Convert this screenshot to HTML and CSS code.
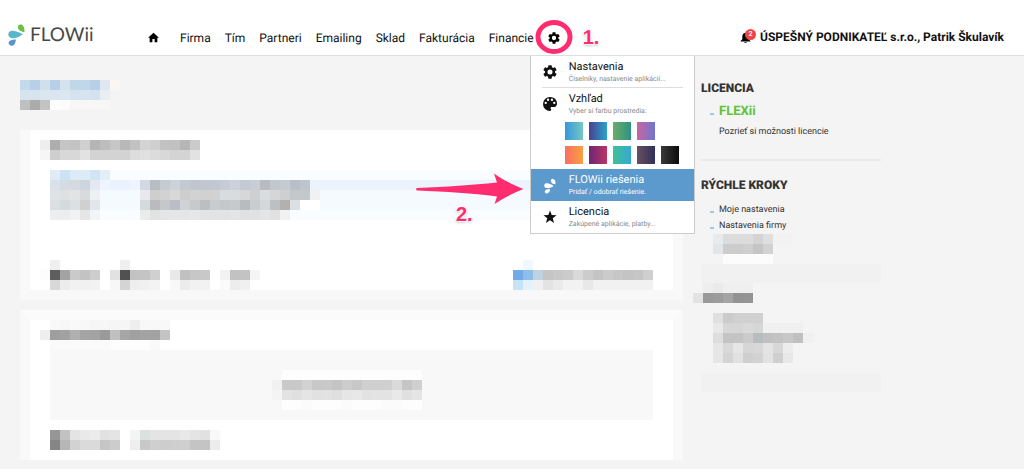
FILE: index.html
```html
<!DOCTYPE html>
<html lang="sk">
<head>
<meta charset="utf-8">
<meta name="viewport" content="width=device-width, initial-scale=1">
<title>FLOWii</title>
<link rel="stylesheet" href="styles.css">
</head>
<body>
<header class="topbar">
  <a class="logo" href="#" aria-label="FLOWii">
    <svg class="logo-mark" viewBox="0 0 17 22" aria-hidden="true">
      <path fill="#6cbf45" d="M16.400 8.200C12.800 7.600 9.900 5.900 9.900 3.200C9.900 1.500 11.300.3 13 .6C15.900 1.200 16.700 4.600 16.400 8.200Z"/>
      <path fill="#56b7cc" d="M14.800 10.300C11.500 12.900 7.600 14.700 4.200 14.200C1.600 13.800.2 12.200.3 10.200C.5 7.800 2.400 6.600 5 6.800C8.300 7 11.700 8.500 14.800 10.300Z"/>
      <path fill="#5b93d0" d="M7.800 15.400C7.800 18.600 6.400 21.600 3.700 21.700C1.800 21.700.5 20.500.6 18.800C.8 16.100 4.200 15.500 7.800 15.400Z"/>
    </svg>
    <span>FLOWii</span>
  </a>
  <nav class="nav" aria-label="Hlavné menu">
    <a class="home" href="#" aria-label="Domov"><svg viewBox="0 0 12 11" aria-hidden="true"><path d="M6 .3L11.900 5.900H10.200V10.700H7.200V7.200H4.800V10.700H1.800V5.900H.1Z"/></svg></a>
    <a href="#">Firma</a>
    <a href="#">Tím</a>
    <a href="#">Partneri</a>
    <a href="#">Emailing</a>
    <a href="#">Sklad</a>
    <a href="#">Fakturácia</a>
    <a href="#">Financie</a>
    <div class="settings">
      <button class="gear" type="button" aria-label="Nastavenia" aria-expanded="true"><svg viewBox="2 2 20 20" aria-hidden="true"><path d="M19.140 12.940c.04-.3.060-.61.060-.94s-.02-.64-.07-.94l2.030-1.580a.49.49 0 0 0 .12-.61l-1.920-3.320a.49.49 0 0 0-.59-.22l-2.390.96a7 7 0 0 0-1.620-.94l-.36-2.540A.48.48 0 0 0 13.920 2.400h-3.840a.48.48 0 0 0-.47.41l-.36 2.540c-.59.24-1.130.57-1.620.94l-2.390-.96a.48.48 0 0 0-.59.22L2.740 8.870a.47.47 0 0 0 .12.610l2.030 1.580c-.05.3-.09.63-.09.940s.02.640.070.940l-2.030 1.580a.49.49 0 0 0-.12.610l1.920 3.320c.12.220.370.290.590.220l2.390-.96c.5.380 1.030.700 1.620.940l.36 2.540c.05.240.240.410.480.410h3.840c.24 0 .440-.170.470-.41l.36-2.540c.59-.24 1.130-.56 1.620-.94l2.390.96c.22.080.470 0 .590-.22l1.920-3.320a.47.47 0 0 0-.12-.61zM12 15.600a3.600 3.600 0 1 1 0-7.200 3.600 3.600 0 0 1 0 7.200z"/></svg></button>
      <svg class="ring" viewBox="0 0 38 36" aria-hidden="true"><ellipse cx="19" cy="18" rx="16" ry="14.500"/></svg>
      <span class="mark mark-one">1.</span>
      <div class="menu">
        <a class="item ruled" href="#">
          <svg class="icon" viewBox="2 2 20 20" aria-hidden="true"><path d="M19.140 12.940c.04-.3.060-.61.060-.94s-.02-.64-.07-.94l2.030-1.580a.49.49 0 0 0 .12-.61l-1.920-3.320a.49.49 0 0 0-.59-.22l-2.390.96a7 7 0 0 0-1.620-.94l-.36-2.540A.48.48 0 0 0 13.920 2.400h-3.840a.48.48 0 0 0-.47.41l-.36 2.540c-.59.24-1.130.57-1.620.94l-2.390-.96a.48.48 0 0 0-.59.22L2.740 8.870a.47.47 0 0 0 .12.610l2.030 1.580c-.05.3-.09.63-.09.940s.02.640.070.940l-2.030 1.580a.49.49 0 0 0-.12.610l1.920 3.320c.12.220.370.290.590.220l2.390-.96c.5.380 1.030.700 1.620.940l.36 2.540c.05.240.240.410.480.410h3.840c.24 0 .440-.170.470-.41l.36-2.540c.59-.24 1.130-.56 1.620-.94l2.390.96c.22.080.470 0 .590-.22l1.920-3.320a.47.47 0 0 0-.12-.61zM12 15.600a3.600 3.600 0 1 1 0-7.200 3.600 3.600 0 0 1 0 7.200z"/></svg>
          <span class="copy"><span class="title">Nastavenia</span><span class="hint">Číselníky, nastavenie aplikácií...</span></span>
        </a>
        <div class="item">
          <svg class="icon" viewBox="3 3 18 18" aria-hidden="true"><path d="M12 3a9 9 0 0 0 0 18c.83 0 1.500-.67 1.500-1.500 0-.39-.15-.74-.39-1.010-.23-.26-.38-.61-.38-.99 0-.83.67-1.500 1.500-1.500H16a5 5 0 0 0 5-5c0-4.420-4.030-8-9-8zm-5.500 9a1.500 1.500 0 1 1 0-3 1.500 1.500 0 0 1 0 3zm3-4a1.500 1.500 0 1 1 0-3 1.500 1.500 0 0 1 0 3zm5 0a1.500 1.500 0 1 1 0-3 1.500 1.500 0 0 1 0 3zm3 4a1.500 1.500 0 1 1 0-3 1.500 1.500 0 0 1 0 3z"/></svg>
          <div class="copy"><span class="title">Vzhľad</span><span class="hint">Vyber si farbu prostredia:</span>
            <div class="swatches">
              <button class="swatch sky" type="button" aria-label="Nebeská"></button>
              <button class="swatch indigo" type="button" aria-label="Indigová"></button>
              <button class="swatch green" type="button" aria-label="Zelená"></button>
              <button class="swatch pink" type="button" aria-label="Ružová"></button>
              <button class="swatch orange row-start" type="button" aria-label="Oranžová"></button>
              <button class="swatch plum" type="button" aria-label="Slivková"></button>
              <button class="swatch mint" type="button" aria-label="Mätová"></button>
              <button class="swatch dusk" type="button" aria-label="Súmrak"></button>
              <button class="swatch black" type="button" aria-label="Čierna"></button>
            </div>
          </div>
        </div>
        <a class="item active" href="#">
          <svg class="icon" viewBox="0 0 14 16" aria-hidden="true"><path d="M12.400 6.300C9.700 5.900 7.800 4.700 7.900 2.700C7.900 1.400 9 .6 10.200.9C12.300 1.400 12.700 3.800 12.400 6.300Z"/><path d="M10.500 8C8.200 9.700 5.900 10.500 3.600 10C1.800 9.600 1 8.500 1.200 7.200C1.500 5.600 2.900 5 4.700 5.300C6.900 5.700 8.800 6.700 10.500 8Z"/><path d="M7 11C7 13.400 5.800 15.400 3.900 15.500C2.500 15.500 1.600 14.600 1.800 13.400C2.100 11.600 4.500 11.100 7 11Z"/></svg>
          <span class="copy"><span class="title">FLOWii riešenia</span><span class="hint">Pridať / odobrať riešenie.</span></span>
        </a>
        <a class="item" href="#">
          <svg class="icon" viewBox="0 0 20 20" aria-hidden="true"><path d="M10 .8L12.400 7.300L19.300 7.500L13.900 11.800L15.800 18.500L10 14.600L4.200 18.500L6.100 11.800L.7 7.500L7.600 7.300Z"/></svg>
          <span class="copy"><span class="title">Licencia</span><span class="hint">Zakúpené aplikácie, platby...</span></span>
        </a>
      </div>
    </div>
  </nav>
  <div class="account">
    <span class="bell"><svg viewBox="0 0 12 12" aria-hidden="true"><path d="M6 .8C8.500 1 9.500 3 9.500 5.200V8L11.300 9.800V10.300H.7V9.800L2.500 8V5.200C2.500 3 3.500 1 6 .8ZM4.600 10.800H7.400C7.200 12.200 4.800 12.200 4.600 10.800Z"/></svg><span class="badge">2</span></span>
    <a href="#">ÚSPEŠNÝ PODNIKATEĽ s.r.o., Patrik Škulavík</a>
  </div>
</header>

<div class="layout">
  <main>
    <div class="mosaic intro" data-cells="c4d9ea b8d0e7 cfdfec b8d0e7 d2e2ef c0d6e9 c0d6e9 b8d0e7 dfe8f1 f9f6f4|d6e4ef d6e4ef dbe7f0 d9e5ef dbe7f0 d4e3ef d6e4ef d2e2ee e9eef3|c0 ab c3 fd fc f9f7f5 f9f7f5 f9f7f5 f7"></div>
    <section class="card first">
      <div class="mosaic outset" data-cells="ee ae c5 c3 d0 b5 bd c6 b8 c2 d4 cf c2 c1 b6 cb|f6 cf d8 d8 e2 d3 d3 d3 d3 dd e0 dc d8 d4 d4 e2"></div>
      <div class="band">
        <div class="mosaic" data-cells="dfecf8 cde3f3 dcebf8 dcebf8 d2e5f5 e2eef8|dbe1ea d5dbe2 d5dae1 cfd5dd e3e8f1 eff5ff eaf2fd eaf2fd f0f5fd d3d9e2 b8bcc3 c6cad3 cdd1da c4c8d0 c1c5ce c2c6cf c3c7d1 c7cbd5 cdd1dc c4c9d2 c9cdd7 b8bbc1 c2c7cf c6cad3 b9bfc8 bfc5cc|e0e3e6 dde1e1 e1e3e5 d8dbdd eef0f3 - - - - e8e9ec ce d2 d6d8d9 ce d2 d1 d2 d8dcde d9dcde d5d7d8 cf d9dddf d4d6d8 cf c4c8ca c4c8ca f1|dbdfe2 d5dadd dce0e3 d0 e3e7ed - - - - d5dadd b9bbbc c5c8ca bbbfc5 d0d3d6 c6cacc bcbfc2 c9ccce c5c8ca c7cacc b9bcbe c9cdd0 d4d8da bbc0c4 b3b1b0 dde0e3 ff ff|ee ed f1f2f3 e6 f2f4f6 - - - - eb e2 e5 e6 e5 e7 e4 e3 e3 e5 e1 e1 e5 e1 f1"></div>
      </div>
      <div class="card-foot">
        <div class="mosaic outset" data-cells="- ef - - - - - - ef|fc 5e a3 ca c3 ce - e2 51 c2 c4 d0 - e9 c1 c7 c8 - f2 c2 c3 f5|- d8 ec f1 f1 f2 - f7 d4 ee f0 f3 - f8 ec f1 f2 - fa ed f0"></div>
        <div class="mosaic" data-cells="- f1f8fd|72ace8 8fbdea c0d1e2 c5 c8 cb d9 cc c4 cb c7 c4 c6 cf|c6e4f6 e6f1fb f0 e3 ea f2 f2 e8 f1 f1 f1 f1 f1 f1"></div>
      </div>
    </section>
    <section class="card second">
      <div class="mosaic outset" data-cells="- f8 f7 f9 f8 f6 f6 f5 f5 ee f8 f8 f8|ee 9e a2 b0 a5 a3 9a c0 a6 a1 a3 a2 c4|- fa fa fa fa fa fa fd fd fd fd f9"></div>
      <div class="panel">
        <div class="mosaic" data-cells="- fd fd fd fd fd fd fd fd fd fd fd fd fd fd|f1 c9 c9 d2 c8 c9 c4 cd c8 d0 cf d0 da c5 cf|f4 e3 e0 e5 e1 e2 df e6 e8 e2 e3 e3 e9 e0 e5|- fd fd fb fd fd fd fb fd fd fd fb fb fd fd"></div>
      </div>
      <div class="mosaic" data-cells="96 c2 e4 e9 eb e1 e4 - f4 dde0e0 e4 e4 e4 e8 e4 e1 f8|85 b6 d2 da da c6 cc - ee c8 cf cd ce cf c4 c4 ec"></div>
    </section>
  </main>
  <aside class="sidebar">
    <section class="license">
      <h2>LICENCIA</h2>
      <ul>
        <li class="plan"><a href="#">FLEXii</a></li>
      </ul>
      <a class="more" href="#">Pozrieť si možnosti licencie</a>
    </section>
    <section class="steps">
      <h2>RÝCHLE KROKY</h2>
      <ul>
        <li><a href="#">Moje nastavenia</a></li>
        <li><a href="#">Nastavenia firmy</a></li>
      </ul>
      <div class="mosaic deep" data-cells="e8ebed dc dc dc d4 df f2 f2|e2e6e9 cc cc cf c5 d2|- fc fc fc fc fc"></div>
    </section>
    <div class="strip"></div>
    <div class="mosaic heading" data-cells="- ee ea ef ef ef|e3 99 9c a4 93 94"></div>
    <div class="mosaic deep" data-cells="e0 cb d0 d0 d0|e9 d6 d6 d9 d6 f0 f0 f0 f0|dd c4 c4 cb b8bcbc c0 c3 c8 c0 f0|e6 d8 e6 d6 d8 e4 d8 ec|e6 d4 e1 cf d2 e2 cf e8"></div>
    <div class="strip"></div>
  </aside>
</div>

<svg class="arrow" viewBox="0 0 110 34" aria-hidden="true"><path d="M1.200 16C30 14.800 56 13.200 81 10.500L78 1.500C88 8.500 98 13.500 107.500 17C98 20.800 88 25.500 78.500 32L81 24.500C56 21.500 30 19.500 1.200 18.600C-.4 18-.4 16.600 1.200 16Z"/></svg>
<span class="mark mark-two">2.</span>
<script src="mosaic.js"></script>
</body>
</html>
```

FILE: mosaic.js
```js
// Builds each pixelated block from its data-cells rows.
// A cell is a grey level (two hex digits), a full hex colour, or "-" for empty.
const NS = "http://www.w3.org/2000/svg";
document.querySelectorAll(".mosaic").forEach((host) => {
  const rows = host.dataset.cells.split("|").map((row) => row.trim().split(" "));
  const columns = Math.max(...rows.map((row) => row.length));
  const svg = document.createElementNS(NS, "svg");
  svg.setAttribute("width", columns * 10);
  svg.setAttribute("height", rows.length * 10);
  svg.setAttribute("aria-hidden", "true");
  rows.forEach((row, y) => row.forEach((cell, x) => {
    if (cell === "-") return;
    const rect = document.createElementNS(NS, "rect");
    rect.setAttribute("x", x * 10);
    rect.setAttribute("y", y * 10);
    rect.setAttribute("width", 10);
    rect.setAttribute("height", 10);
    rect.setAttribute("fill", "#" + (cell.length === 2 ? cell.repeat(3) : cell));
    svg.append(rect);
  }));
  host.append(svg);
});
```

FILE: styles.css
```css
* {
  box-sizing: border-box;
}

body {
  position: relative;
  margin: 0;
  background: #f4f4f4;
  color: #222;
  font-family: Roboto, "Liberation Sans", sans-serif;
  font-size: 12px;
  text-rendering: geometricPrecision;
}

a {
  color: inherit;
  text-decoration: none;
}

button {
  margin: 0;
  padding: 0;
  border: 0;
  background: none;
}

svg {
  display: block;
}

.topbar {
  display: flex;
  align-items: stretch;
  height: 56px;
  padding: 20px 20px 0 8px;
  border-bottom: 1px solid #ddd;
  background: #fff;
}

.logo {
  display: flex;
  align-items: center;
  gap: 5px;
  width: 140px;
  padding-bottom: 5px;
  color: #484848;
  font-family: Lato, sans-serif;
  font-size: 19px;
  line-height: 22px;
}

.logo-mark {
  width: 17px;
  height: 22px;
}

.nav {
  display: flex;
  gap: 14px;
  color: #111;
  line-height: 36px;
}

.home {
  display: flex;
  align-items: center;
  margin-right: 7px;
}

.home svg {
  width: 11px;
  height: 11px;
}

.settings {
  position: relative;
}

.gear {
  display: flex;
  align-items: center;
  height: 35px;
}

.gear svg {
  width: 12px;
  height: 12px;
}

.ring {
  position: absolute;
  top: -1px;
  left: -13px;
  width: 38px;
  height: 36px;
  fill: none;
  stroke: #ff2d6f;
  stroke-width: 5;
}

.mark {
  position: absolute;
  color: #ff2d6f;
  font: bold 20px/24px "Liberation Sans", sans-serif;
  text-shadow: 1px 1px 1px #fff, -1px -1px 1px #fff, 0 1px 3px #999;
}

.mark-one {
  top: 6px;
  left: 35px;
}

.mark-two {
  top: 203px;
  left: 456px;
}

.menu {
  position: absolute;
  z-index: 2;
  top: 36px;
  left: -18px;
  width: 165px;
  border: 1px solid #ccc;
  border-top: 0;
  background: #fff;
  line-height: 13px;
}

.item {
  position: relative;
  display: flex;
  gap: 12px;
  padding: 4px 0 2px 12px;
}

.ruled::after {
  position: absolute;
  right: 11px;
  bottom: 0;
  left: 11px;
  height: 1px;
  background: #ddd;
  content: "";
}

.icon {
  flex: none;
  width: 14px;
  height: 14px;
  margin-top: 5px;
  fill: #111;
}

.copy,
.title,
.hint {
  display: block;
}

.title {
  color: #111;
  font-size: 11px;
}

.hint {
  color: #888;
  font-size: 7px;
}

.active {
  background: #5c99cc;
}

.active .title,
.active .hint {
  color: #fff;
}

.active .icon {
  width: 14px;
  height: 16px;
  fill: #fff;
}

.swatches {
  display: grid;
  grid-template-columns: repeat(5, 18px);
  gap: 6px;
  margin: 4px 0 3px -4px;
}

.swatch {
  height: 18px;
}

.row-start { grid-column-start: 1; }
.sky { background: linear-gradient(90deg, #3498db, #76c7c4); }
.indigo { background: linear-gradient(90deg, #4b3f92, #27a5cb); }
.green { background: linear-gradient(90deg, #6cad68, #2d9282); }
.pink { background: linear-gradient(90deg, #ca659f, #6f75cf); }
.orange { background: linear-gradient(90deg, #fb6d62, #f9a043); }
.plum { background: linear-gradient(90deg, #6c2775, #bd3465); }
.mint { background: linear-gradient(90deg, #3fc194, #37a8d5); }
.dusk { background: linear-gradient(90deg, #69505e, #30305b); }
.black { background: linear-gradient(90deg, #393939, #0c0c0c); }

.account {
  display: flex;
  gap: 4px;
  margin-left: auto;
  color: #111;
  font-weight: 700;
  line-height: 35px;
}

.bell {
  position: relative;
  width: 16px;
  padding-top: 12px;
}

.bell svg {
  width: 11px;
  height: 11px;
}

.badge {
  position: absolute;
  top: 9px;
  right: 0;
  width: 11px;
  height: 11px;
  border-radius: 50%;
  background: #f04444;
  color: #fff;
  font-size: 7px;
  line-height: 11px;
  text-align: center;
}

.layout {
  display: grid;
  grid-template-columns: minmax(0, 1fr) 300px;
  gap: 18px;
  padding: 24px 23px 9px 20px;
}

.intro {
  margin-bottom: 20px;
}

.card {
  border: 0 solid #f9f9f9;
  border-width: 0 10px;
  background: #fff;
}

.first {
  margin-bottom: 10px;
  padding: 10px 20px 0;
  border-bottom: 10px solid #f8f8f8;
}

.second {
  padding: 0 20px 10px;
  border-top: 10px solid #fbfbfb;
}

.outset {
  margin-left: -10px;
}

.band {
  margin: 10px 0 40px;
  background: linear-gradient(#fafdff 10px, #ebf4fc 10px 20px, #f5faff 20px 40px, #fafdff 40px);
}

.card-foot {
  display: flex;
  justify-content: space-between;
}

.panel {
  display: flex;
  justify-content: center;
  margin-bottom: 10px;
  padding: 20px 10px 10px 0;
  background: #f8f8f8;
}

.sidebar {
  color: #333;
  font-size: 9px;
  line-height: 16px;
}

.sidebar h2 {
  margin: 0 0 8px;
  font-size: 12px;
  font-weight: 900;
  line-height: 16px;
}

.sidebar ul {
  margin: 0;
  padding: 0 0 0 18px;
  list-style: none;
}

.sidebar li::before {
  float: left;
  width: 4px;
  height: 2px;
  margin: 9px 0 0 -9px;
  background: #9cc8ec;
  content: "";
}

.license {
  width: 180px;
  margin-bottom: 16px;
  padding-bottom: 19px;
  border-bottom: 2px solid #e9e9e9;
}

.license .plan {
  margin-bottom: 4px;
  color: #5cc437;
  font-size: 13px;
  font-weight: 700;
}

.more {
  margin-left: 18px;
}

.steps ul {
  padding-top: 1px;
}

.deep {
  margin-left: 12px;
}

.strip {
  width: 180px;
  height: 19px;
  background: #f1f1f1;
}

.heading {
  margin: 0 0 10px -8px;
}

.deep + .strip {
  margin-top: 10px;
}

.arrow {
  position: absolute;
  z-index: 3;
  top: 172px;
  left: 416px;
  width: 110px;
  height: 34px;
  fill: #ff2d6f;
}
```
